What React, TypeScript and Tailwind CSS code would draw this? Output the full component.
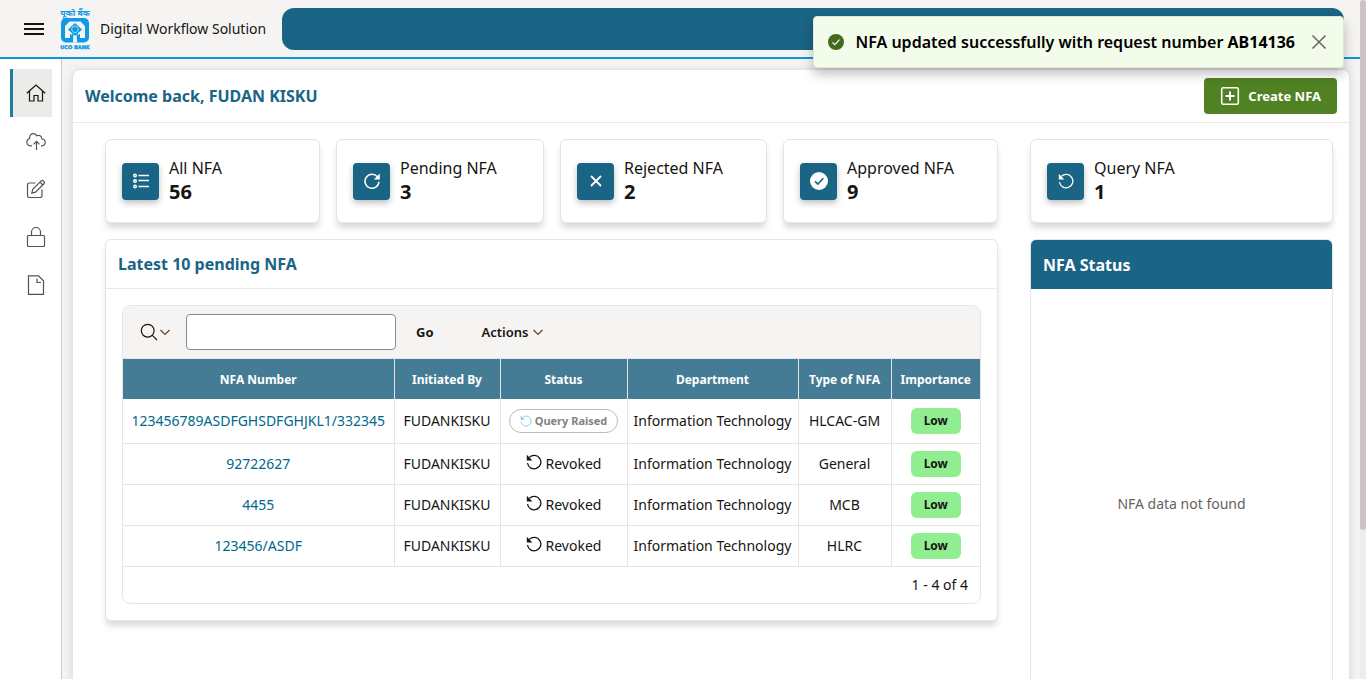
import React from "react";

const ink = "#161513";

type IconProps = { className?: string };

function Restore({ className }: IconProps) {
  return (
    <svg viewBox="0 0 16 16" className={className} fill="none" stroke="currentColor" strokeWidth="1.3" aria-hidden="true">
      <path d="M3.4 3.4A6.700 6.700 0 1 1 1.500 9" />
      <path d="M.8 .8v5.600h5.600z" fill="currentColor" stroke="none" />
    </svg>
  );
}

function Refresh({ className }: IconProps) {
  return (
    <svg viewBox="0 0 16 16" className={className} fill="none" stroke="currentColor" aria-hidden="true">
      <path d="M13.400 3.800A7 7 0 1 0 15 8.800" strokeWidth="1.500" />
      <path d="M15.800 .6v6h-6z" fill="currentColor" stroke="none" />
    </svg>
  );
}

function ListIcon({ className }: IconProps) {
  return (
    <svg viewBox="0 0 16 16" className={className} stroke="currentColor" aria-hidden="true">
      <path d="M5.500 2.500H16M5.500 7.500H16M5.500 13.500H16" strokeWidth="1.400" />
      <g fill="currentColor" stroke="none">
        <circle cx="2" cy="2.500" r="2" />
        <circle cx="2" cy="8" r="2" />
        <circle cx="2" cy="13.500" r="2" />
      </g>
      <g fill="#1a6485" stroke="none">
        <circle cx="2" cy="2.500" r=".5" />
        <circle cx="2" cy="8" r=".5" />
        <circle cx="2" cy="13.500" r=".5" />
      </g>
    </svg>
  );
}

function Cross({ className }: IconProps) {
  return (
    <svg viewBox="0 0 16 16" className={className} fill="none" stroke="currentColor" strokeWidth="1.800" aria-hidden="true">
      <path d="M3 3l10 10M13 3L3 13" />
    </svg>
  );
}

function CheckDisc({ className }: IconProps) {
  return (
    <svg viewBox="0 0 16 16" className={className} fill="none" aria-hidden="true">
      <circle cx="8" cy="8" r="8" fill="currentColor" />
      <path d="M4.500 8.300l2.500 2.500 4.800-5.200" stroke="#1a6485" strokeWidth="1.500" />
    </svg>
  );
}

function Chevron({ className }: IconProps) {
  return (
    <svg viewBox="0 0 10 10" className={className} fill="none" stroke="currentColor" strokeWidth="1.200" aria-hidden="true">
      <path d="M.5 3L5 7.500 9.500 3" />
    </svg>
  );
}

function Logo() {
  return (
    <svg viewBox="0 0 32 42" className="h-[42px] w-8 shrink-0" role="img" aria-label="UCO Bank">
      <g fill="#0d9be8" fontFamily='"Noto Sans", "Liberation Sans", sans-serif' fontWeight="700">
        <text x="15" y="7.500" fontSize="8.500" textAnchor="middle">यूको बैंक</text>
        <text x="15" y="41" fontSize="5" textAnchor="middle" stroke="#0d9be8" strokeWidth=".4" fontFamily='"DejaVu Sans", sans-serif'>UCO BANK</text>
      </g>
      <rect x="1" y="10" width="28" height="24.500" rx="5" fill="#0d9be8" />
      <path d="M9.500 13.500h11l4.500 4.500v12h-5v-4.500l-3 3v6h-4v-6l-3-3v4.500H5V18z" fill="#f5f4f2" />
      <path d="M15 15l7 6.500-7 6.500-7-6.500z" fill="#0d9be8" />
      <circle cx="15" cy="21.300" r="3.300" fill="#0d9be8" stroke="#bfe3f8" strokeWidth=".8" />
      <path d="M12.500 26v5.500M17.500 26v5.500" stroke="#0d9be8" strokeWidth="1.500" />
    </svg>
  );
}

const navItems = [
  {
    label: "Home",
    art: <path d="M.8 10.300L10 2l9.200 8.300M3.500 8v10H8v-5.500h4V18h4.500V8" />,
  },
  {
    label: "Upload",
    art: <path d="M6 14.800H4.500A3.700 3.700 0 0 1 3.700 7.500C3.300 4.500 5.300 2.300 7.800 2.700c1.500.2 2.400 1 2.800 2 2.500-1.200 5.400.5 5.200 3.300 2 0 3.400 1.400 3.400 3.300s-1.300 3.500-3.200 3.500H15M10.500 19v-8.500M7.500 13.300l3-3 3 3" />,
  },
  {
    label: "Edit",
    art: <path d="M9.500 4H3.200a1.700 1.700 0 0 0-1.700 1.700v11.100a1.700 1.700 0 0 0 1.700 1.700h11.100a1.700 1.700 0 0 0 1.700-1.700V10.500M5.800 14.200l1-3.800L15.500 1.700c1-1 3.800 1.500 2.700 2.800l-8.700 8.600zM14 3.200l2.800 2.800" />,
  },
  {
    label: "Security",
    art: <path d="M2.500 8.500h15a1 1 0 0 1 1 1V18.500a1 1 0 0 1-1 1h-15a1 1 0 0 1-1-1V9.500a1 1 0 0 1 1-1zM5.500 8.500V5a4.500 4.500 0 0 1 9 0v3.500" />,
  },
  {
    label: "Documents",
    art: <path d="M2.500.8h10l5 5v13.500h-15zM11 3.500v4h4" />,
  },
];

function StatCard({ label, value, icon }: { label: string; value: number; icon: React.ReactNode }) {
  return (
    <section className="flex h-21 items-center gap-2.5 rounded-md border border-[#e6e5e4] bg-white px-4 shadow-[0_6px_6px_-1px_rgba(0,0,0,0.15)]">
      <span className="flex size-[37px] shrink-0 items-center justify-center rounded bg-[#1a6485] text-white shadow-[0_3px_6px_rgba(0,0,0,0.25)]">
        {icon}
      </span>
      <div className="pb-0.5">
        <h2 className="text-base leading-6">{label}</h2>
        <p className="text-xl leading-6 font-bold">{value}</p>
      </div>
    </section>
  );
}

const rows = [
  { id: "123456789ASDFGHSDFGHJKL1/332345", type: "HLCAC-GM", query: true },
  { id: "92722627", type: "General", query: false },
  { id: "4455", type: "MCB", query: false },
  { id: "123456/ASDF", type: "HLRC", query: false },
];

const columns = [
  { name: "NFA Number", width: "w-[271px]" },
  { name: "Initiated By", width: "w-[106px]" },
  { name: "Status", width: "w-[127px]" },
  { name: "Department", width: "w-[171px]" },
  { name: "Type of NFA", width: "w-[93px]" },
  { name: "Importance", width: "w-[89px]" },
];

export default function App() {
  return (
    <div className="relative flex h-screen flex-col overflow-hidden bg-[#f5f4f2] pr-1.5 font-['Noto_Sans','Liberation_Sans',sans-serif] text-sm text-[#161513]">
      <header className="flex h-[59px] shrink-0 items-center border-b-2 border-[#0d96e0] pr-4 pl-6">
        <button aria-label="Toggle navigation" className="mr-4 flex w-5 flex-col gap-[3px]">
          <span className="h-0.5 bg-[#161513]" />
          <span className="h-0.5 bg-[#161513]" />
          <span className="h-0.5 bg-[#161513]" />
        </button>
        <Logo />
        <a href="#home" className="ml-2 w-[182px] shrink-0 whitespace-nowrap text-sm">Digital Workflow Solution</a>
        <div className="h-[42px] grow rounded-xl bg-[#1a6485]" />
      </header>

      <div className="flex min-h-0 grow">
        <nav aria-label="Main" className="flex w-[62px] shrink-0 flex-col border-r border-[#c9c8c7] bg-white pt-2.5 pr-[9px] pl-2.5">
          {navItems.map((item, i) => (
            <a
              key={item.label}
              href={"#" + item.label.toLowerCase()}
              aria-label={item.label}
              className={
                i === 0
                  ? "flex h-12 items-center justify-center border-l-3 border-[#227e9e] bg-[#ebebea] pl-1.5 text-[#161513]"
                  : "flex h-12 items-center justify-center pl-[9px] text-[#55524f]"
              }
            >
              <svg viewBox="0 0 20 20" className="size-5" fill="none" stroke="currentColor" strokeWidth="1.200" aria-hidden="true">
                {item.art}
              </svg>
            </a>
          ))}
        </nav>

        <main className="min-w-0 grow px-2.5 pt-2.5">
          <div className="min-h-[720px] rounded-lg border border-[#e6e5e4] bg-white shadow-[0_2px_10px_rgba(0,0,0,0.12)]">
            <div className="flex h-[53px] items-center justify-between border-b border-[#e9e8e7] pr-3 pl-3">
              <h1 className="text-base font-bold text-[#1a6485]">Welcome back, FUDAN KISKU</h1>
              <button className="flex h-9 items-center gap-2 rounded-sm bg-[#508223] px-4 text-[13px] font-bold text-white">
                <svg viewBox="0 0 20 20" className="size-5" fill="none" stroke="currentColor" aria-hidden="true">
                  <rect x="1.700" y="1.700" width="16.600" height="16.600" rx="1.500" strokeWidth="1.600" />
                  <path d="M10 5.500v9M5.500 10h9" strokeWidth="2" />
                </svg>
                Create NFA
              </button>
            </div>

            <div className="grid grid-cols-[893fr_303fr] gap-8 pt-4 pr-4 pl-8">
              <div className="flex min-w-0 flex-col gap-4">
                <div className="grid grid-cols-[215fr_208fr_207fr_215fr] gap-4">
                  <StatCard label="All NFA" value={56} icon={<ListIcon className="size-4" />} />
                  <StatCard label="Pending NFA" value={3} icon={<Refresh className="size-4" />} />
                  <StatCard label="Rejected NFA" value={2} icon={<Cross className="size-4" />} />
                  <StatCard label="Approved NFA" value={9} icon={<CheckDisc className="size-[18px]" />} />
                </div>

                <section className="rounded-md border border-[#e6e5e4] bg-white shadow-[0_6px_6px_-1px_rgba(0,0,0,0.15)]">
                  <h2 className="flex h-[49px] items-center border-b border-[#e9e8e7] px-3 text-base font-bold text-[#1a6485]">Latest 10 pending NFA</h2>
                  <div className="p-4">
                    <div className="overflow-hidden rounded-lg border border-[#e6e5e4]">
                      <div className="flex h-[53px] items-center border-b border-[#e6e5e4] bg-[#f5f4f2] pl-4">
                        <button aria-label="Select columns to search" className="mr-4 flex items-center gap-px">
                          <svg viewBox="0 0 20 20" className="size-5" fill="none" stroke={ink} strokeWidth="1.200" aria-hidden="true">
                            <circle cx="8.700" cy="8.700" r="6.400" />
                            <path d="M13.300 13.300L18 18" />
                          </svg>
                          <Chevron className="size-2.5 text-[#6b3f1d]" />
                        </button>
                        <input aria-label="Search" className="h-9 w-[210px] rounded-sm border border-[#8b8987] bg-white px-2" />
                        <button className="mx-1 px-4 text-[13px] font-bold">Go</button>
                        <button className="ml-7 flex items-center gap-1 text-[13px] font-semibold">
                          Actions
                          <Chevron className="size-2.5 text-[#6b3f1d]" />
                        </button>
                      </div>
                      <table className="w-full table-fixed border-collapse text-center">
                        <thead>
                          <tr className="h-10 bg-[#457c95] text-xs text-white">
                            {columns.map((c) => (
                              <th key={c.name} scope="col" className={c.width + " border-r border-[#e6e5e4] pt-0.5 font-bold whitespace-nowrap last:border-r-0"}>{c.name}</th>
                            ))}
                          </tr>
                        </thead>
                        <tbody>
                          {rows.map((r) => (
                            <tr key={r.id} className="h-[41px] border-b border-[#e6e5e4] whitespace-nowrap first:h-11 *:border-r *:border-[#e6e5e4] *:last:border-r-0">
                              <td><a href="#nfa" className="text-[#00688c]">{r.id}</a></td>
                              <td>FUDANKISKU</td>
                              <td>
                                {r.query ? (
                                  <span className="inline-flex h-6 items-center gap-[3px] rounded-xl border border-[#bdbcbb] px-2.5 text-[11px] font-bold text-[#848280]">
                                    <Restore className="size-3 text-[#87ceeb]" />
                                    Query Raised
                                  </span>
                                ) : (
                                  <span className="inline-flex items-center gap-1 pt-0.5">
                                    <Restore className="mb-1 size-4" />
                                    Revoked
                                  </span>
                                )}
                              </td>
                              <td>Information Technology</td>
                              <td>{r.type}</td>
                              <td>
                                <span className="inline-flex h-[26px] w-[50px] items-center justify-center rounded-md bg-[#90ee90] text-xs font-bold">Low</span>
                              </td>
                            </tr>
                          ))}
                        </tbody>
                      </table>
                      <p className="flex h-9 items-center justify-end pr-3">1 - 4 of 4</p>
                    </div>
                  </div>
                </section>
              </div>

              <div className="flex min-w-0 flex-col gap-4">
                <StatCard label="Query NFA" value={1} icon={<Restore className="size-4" />} />
                <section className="overflow-hidden rounded-md border border-[#e6e5e4] bg-white">
                  <h2 className="flex h-[49px] items-center bg-[#1a6485] px-3 text-base font-bold text-white">NFA Status</h2>
                  <div className="flex h-[430px] items-center justify-center text-[#65625f]">NFA data not found</div>
                </section>
              </div>
            </div>
          </div>
        </main>
      </div>

      <div role="status" className="absolute top-4 right-[22px] flex h-[52px] items-center rounded-sm border border-[#dfe8d6] bg-[#f3fcea] pr-4 pl-3.5 text-base font-semibold text-black shadow-[0_6px_12px_rgba(0,0,0,0.25)]">
        <svg viewBox="0 0 16 16" className="mr-3 size-4" fill="none" aria-hidden="true">
          <circle cx="8" cy="8" r="8" fill="#436b1d" />
          <path d="M4.500 8.300l2.300 2.300 4.700-4.900" stroke="#fff" strokeWidth="1.200" />
        </svg>
        <span className="whitespace-nowrap">NFA updated successfully with request number <strong className="font-bold">AB14136</strong></span>
        <button aria-label="Close" className="ml-4">
          <svg viewBox="0 0 16 16" className="size-4" fill="none" stroke="#6b6966" strokeWidth="1.600" aria-hidden="true">
            <path d="M1.500 1.500l13 13M14.500 1.500l-13 13" />
          </svg>
        </button>
      </div>

      <div aria-hidden="true" className="absolute inset-y-0 right-0 w-1.5 bg-[#ededec]">
        <div className="h-[78%] rounded-full bg-[#cbc3c1]" />
      </div>
    </div>
  );
}
